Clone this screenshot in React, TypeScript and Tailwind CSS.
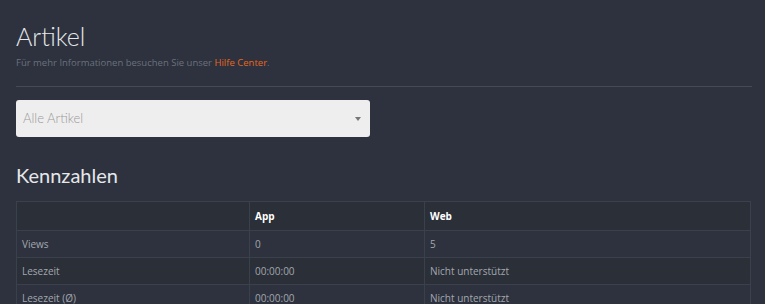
const rows = [
  { label: 'Views', app: '0', web: '5' },
  { label: 'Lesezeit', app: '00:00:00', web: 'Nicht unterstützt' },
  { label: 'Lesezeit (Ø)', app: '00:00:00', web: 'Nicht unterstützt' },
]

export default function App() {
  return (
    <div className="min-h-[304px] bg-[#2d323e] px-4 pt-[20px] font-['Open_Sans',sans-serif] text-[#c9ccd2]">
      {/* Header */}
      <h1 className="font-['Lato',sans-serif] text-[25px] font-light leading-[32px] text-[#e6e7ea]">Artikel</h1>
      <p className="mt-[4px] font-['Open_Sans',sans-serif] text-[9.5px] leading-[14px] text-[#6b717c]">
        Für mehr Informationen besuchen Sie unser <a className="text-[#e8661e]">Hilfe Center</a>.
      </p>
      <hr className="mt-[16px] mr-[-3px] border-t border-[#454a55]" />

      {/* Filter */}
      <div className="mt-[13px] flex h-[37px] w-[354px] items-center justify-between rounded-[3px] bg-[#eeeeee] pl-[7px] pr-[9px]">
        <span className="font-['Lato',sans-serif] text-[13px] font-light text-[#9a9a9a]">Alle Artikel</span>
        <span className="h-0 w-0 border-x-[3.5px] border-t-[4px] border-x-transparent border-t-[#777]" />
      </div>

      {/* Kennzahlen */}
      <h2 className="mt-[26px] font-['Lato',sans-serif] text-[20px] leading-[24px] text-[#e6e7ea]">Kennzahlen</h2>
      <table className="mt-[14px] w-[735px] border-collapse text-[10px]">
        <thead>
          <tr className="h-[29px] bg-[#2a2f38]">
            <th className="w-[233px] border border-[#3b414c]" />
            <th className="w-[175px] border border-[#3b414c] px-[5px] text-left font-bold text-white">App</th>
            <th className="border border-[#3b414c] px-[5px] text-left font-bold text-white">Web</th>
          </tr>
        </thead>
        <tbody>
          {rows.map((r, i) => (
            <tr key={r.label} className={`h-[27px] ${i % 2 === 1 ? 'bg-[#2a2f38]' : 'bg-[#2d323e]'}`}>
              <td className="border border-[#3b414c] px-[5px] text-[#a3a7ae]">{r.label}</td>
              <td className="border border-[#3b414c] px-[5px] text-[#a3a7ae]">{r.app}</td>
              <td className="border border-[#3b414c] px-[5px] text-[#a3a7ae]">{r.web}</td>
            </tr>
          ))}
        </tbody>
      </table>
    </div>
  )
}
